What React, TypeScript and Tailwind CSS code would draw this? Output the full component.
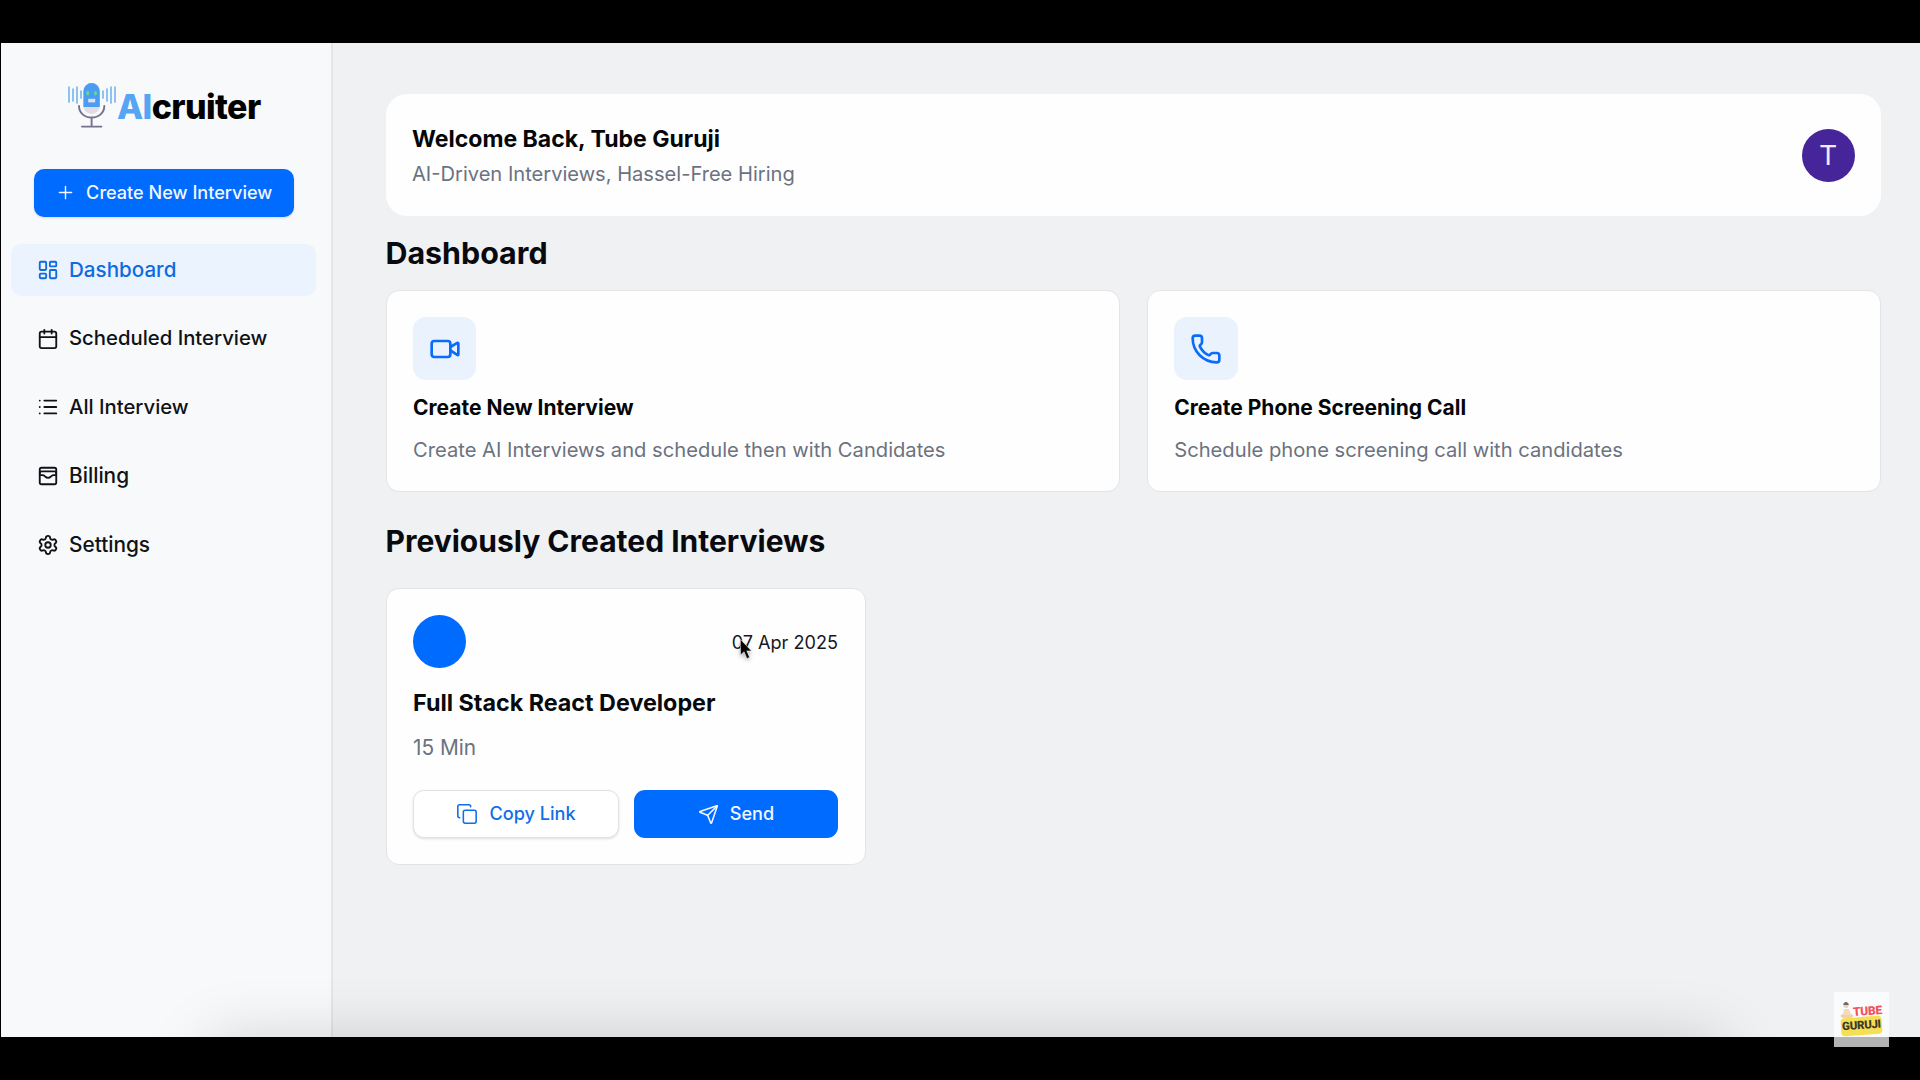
import type { ReactNode } from "react";
import {
  Calendar,
  Copy,
  LayoutDashboard,
  List,
  Phone,
  Plus,
  Send,
  Settings,
  Video,
  WalletCards,
} from "lucide-react";

function MicLogo() {
  return (
    <svg className="h-[48px] w-[50px] shrink-0" viewBox="0 0 50 48" fill="none">
      <g stroke="#7db9ee" strokeWidth="1.7" strokeLinecap="round">
        <path d="M3 6v15M7 8v12M11 6v16M15 10v7" />
        <path d="M37 10v7M41 8v12M45 6v16M49 6v15" />
      </g>
      <rect x="17.4" y="2" width="16.4" height="31" rx="8.2" fill="#e3dae2" />
      <path d="M17.4 26V10.2a8.2 8.2 0 0 1 16.4 0V26z" fill="#4a9df3" />
      <ellipse cx="21.7" cy="12.3" rx="1.4" ry="2.2" fill="#5fdc8c" />
      <ellipse cx="29.5" cy="12.3" rx="1.4" ry="2.2" fill="#5fdc8c" />
      <rect x="22.2" y="17.8" width="7" height="3.6" fill="#dfe0ea" />
      <path
        d="M13 25c0 7 5.500 11.500 12.600 11.500S38.300 32 38.300 25M25.600 36.500V45M16 45.600h19.400"
        stroke="#77708f"
        strokeWidth="1.900"
        strokeLinecap="round"
      />
    </svg>
  );
}

const nav = [
  { label: "Dashboard", Icon: LayoutDashboard, size: "text-[20.600px]", active: true },
  { label: "Scheduled Interview", Icon: Calendar, size: "text-[20.300px]" },
  { label: "All Interview", Icon: List, size: "text-[20.300px]" },
  { label: "Billing", Icon: WalletCards, size: "text-[20.800px]" },
  { label: "Settings", Icon: Settings, size: "text-[20.800px]" },
];

function Sidebar() {
  return (
    <aside className="flex w-[332px] shrink-0 flex-col border-r-2 border-[#e4e5e8] bg-[#f7f9fb]">
      <div className="mt-[38px] ml-[65px] flex h-[50px] items-start">
        <MicLogo />
        <span className="mt-[4px] ml-[1px] text-[34px] leading-[44px] font-extrabold tracking-[-0.600px] text-black">
          <span className="text-[#55a5f5]">AI</span>cruiter
        </span>
      </div>
      <button className="mt-[38px] ml-[32.500px] flex h-[47.500px] w-[260px] items-center justify-center gap-[10.500px] rounded-[10px] bg-[#006bff] text-[18.100px] font-medium text-[#f4f7ff] shadow-sm">
        <Plus size={21} strokeWidth={1.6} />
        Create New Interview
      </button>
      <nav className="mt-[27.500px] ml-[10px] flex flex-col gap-[16.700px]">
        {nav.map(({ label, Icon, size, active }) => (
          <a
            key={label}
            className={`flex h-[52px] w-[305px] items-center gap-[10px] rounded-[10px] pl-[26px] font-medium ${size} ${
              active ? "bg-[#eaf3fe] text-[#0f6be0]" : "text-[#101216]"
            }`}
          >
            <Icon size={22} strokeWidth={2} />
            {label}
          </a>
        ))}
      </nav>
    </aside>
  );
}

function OptionCard({ icon, title, text }: { icon: ReactNode; title: string; text: string }) {
  return (
    <div className="flex h-[202px] flex-col rounded-[13px] border border-[#e2e4e8] bg-[#fefefe] px-[26.500px] pt-[26px]">
      <div className="flex size-[63.400px] items-center justify-center rounded-[13px] bg-[#eaf2fd] text-[#0a6cfb]">
        {icon}
      </div>
      <h3 className="mt-[12px] text-[21px] leading-[32px] font-bold text-[#050608]">{title}</h3>
      <p className="mt-[9.500px] text-[20.170px] leading-[32px] text-[#6b7280]">{text}</p>
    </div>
  );
}

function InterviewCard() {
  return (
    <div className="flex h-[277px] w-[480px] flex-col rounded-[13px] border border-[#e2e4e8] bg-[#fefefe] px-[26.500px] pt-[26px]">
      <div className="flex items-center justify-between">
        <div className="size-[53px] rounded-full bg-[#006bff]" />
        <span className="relative top-px text-[18.100px] text-[#16181c]">
          07 Apr 2025
          <Cursor />
        </span>
      </div>
      <h3 className="mt-[17px] text-[23.300px] leading-[36px] font-bold text-[#08090c]">
        Full Stack React Developer
      </h3>
      <p className="mt-[11px] text-[20.800px] leading-[32px] text-[#6b7280]">15 Min</p>
      <div className="mt-[26px] flex gap-[15px] text-[18.100px] font-medium">
        <button className="flex h-[48px] flex-1 items-center justify-center gap-[11px] rounded-[11px] border border-[#e2e3e7] bg-white text-[#0f6fe8] shadow-sm">
          <Copy size={22} strokeWidth={1.7} />
          Copy Link
        </button>
        <button className="flex h-[48px] flex-1 items-center justify-center gap-[11px] rounded-[11px] bg-[#006bff] text-[#f4f7ff]">
          <Send size={21} strokeWidth={1.8} />
          Send
        </button>
      </div>
    </div>
  );
}

function Cursor() {
  return (
    <svg
      className="absolute top-[9px] left-[7px] h-[24px] w-[15px] drop-shadow-[0_2px_2px_rgba(0,0,0,0.3)]"
      viewBox="0 0 15 24"
    >
      <path
        d="M1.500 1.500v15.500l3.600-3.300 2.800 6.800 2.700-1.100-2.800-6.500h4.700z"
        fill="#050505"
        stroke="#fff"
        strokeOpacity="0.600"
        strokeWidth="0.800"
      />
    </svg>
  );
}

function Watermark() {
  return (
    <div className="absolute right-[31px] bottom-[33px] size-[55px] bg-white/70">
      <svg className="absolute top-[9px] left-[6px] h-[18px] w-[14px]" viewBox="0 0 14 18">
        <ellipse cx="7" cy="15" rx="6.500" ry="2.500" fill="#f3cfae" />
        <path d="M3 14l1-6h5l2 6z" fill="#f6d8bb" />
        <circle cx="6" cy="4.500" r="2.500" fill="#f3cfae" />
        <path d="M3.300 4a2.700 2.700 0 0 1 5.400 0zM5 1h2v1.500H5z" fill="#6d6d70" />
      </svg>
      <div className="absolute top-[12px] left-[19px] -rotate-4 font-['Roboto',sans-serif] text-[12px] leading-[14px] font-black tracking-[-0.300px] text-[#f4515b]">
        TUBE
      </div>
      <div className="absolute top-[25px] left-[7px] flex h-[18px] w-[41px] -rotate-4 items-center justify-center rounded-[4px] bg-[#f7df52] font-['Roboto',sans-serif] text-[11.500px] font-black tracking-[-0.300px] text-[#3b3a2c]">
        GURUJI
      </div>
    </div>
  );
}

export default function App() {
  return (
    <div className="relative flex h-[1080px] w-[1920px] flex-col overflow-hidden bg-black pt-[43px] pb-[43px] font-['Inter',sans-serif]">
      <div className="relative ml-px flex flex-1 overflow-hidden">
        <Sidebar />
        <main className="flex flex-1 flex-col bg-[#eff1f3] pt-[51px] pr-[39px] pl-[52.500px]">
          <header className="flex h-[122px] items-center justify-between rounded-[21px] bg-[#fefefe] px-[26.500px]">
            <div>
              <h2 className="mt-px text-[23.040px] leading-[37px] font-bold text-[#050608]">
                Welcome Back, Tube Guruji
              </h2>
              <p className="text-[20.100px] leading-[32px] text-[#6b7280]">
                AI-Driven Interviews, Hassel-Free Hiring
              </p>
            </div>
            <div className="flex size-[53px] items-center justify-center rounded-full bg-[#46259b] pt-px font-['Roboto',sans-serif] text-[28px] text-[#f0ebfa]">
              T
            </div>
          </header>
          <h1 className="mt-[16px] text-[30.400px] leading-[42px] font-bold text-[#080a10]">
            Dashboard
          </h1>
          <div className="mt-[16px] grid grid-cols-2 gap-[27px]">
            <OptionCard
              icon={<Video size={32} strokeWidth={2} />}
              title="Create New Interview"
              text="Create AI Interviews and schedule then with Candidates"
            />
            <OptionCard
              icon={<Phone size={32} strokeWidth={2} />}
              title="Create Phone Screening Call"
              text="Schedule phone screening call with candidates"
            />
          </div>
          <h1 className="mt-[28px] mb-[26px] text-[30px] leading-[42px] font-bold text-[#080a10]">
            Previously Created Interviews
          </h1>
          <InterviewCard />
        </main>
        <div className="pointer-events-none absolute top-full left-[210px] h-[60px] w-[1510px] shadow-[0_4px_64px_rgba(0,0,0,0.180)]" />
      </div>
      <Watermark />
    </div>
  );
}
